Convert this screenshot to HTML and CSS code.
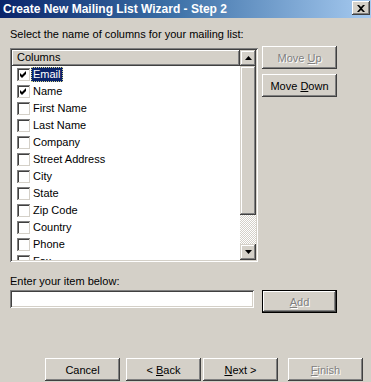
FILE: index.html
```html
<!DOCTYPE html>
<html>
<head>
<meta charset="utf-8">
<link rel="stylesheet" href="styles.css">
</head>
<body>
<div class="window">
  <div class="titlebar">
    <span class="title">Create New Mailing List Wizard - Step 2</span>
    <span class="close"><svg width="8" height="7" viewBox="0 0 8 7"><path d="M0 0h2l2 2 2-2h2L5 3.5 8 7H6L4 5 2 7H0l3-3.5z" fill="#000"/></svg></span>
  </div>
  <div class="content">
    <p class="prompt">Select the name of columns for your mailing list:</p>
    <div class="main">
      <div class="listbox">
        <div class="list-view">
          <div class="header">Columns</div>
          <ul class="rows">
            <li class="row"><span class="check"><svg width="7" height="7" viewBox="0 0 7 7"><path d="M0 2l2 2 4-4v3L2 7 0 5z" fill="#000"/></svg></span><span class="label selected">Email</span></li>
            <li class="row"><span class="check"><svg width="7" height="7" viewBox="0 0 7 7"><path d="M0 2l2 2 4-4v3L2 7 0 5z" fill="#000"/></svg></span><span class="label">Name</span></li>
            <li class="row"><span class="check"></span><span class="label">First Name</span></li>
            <li class="row"><span class="check"></span><span class="label">Last Name</span></li>
            <li class="row"><span class="check"></span><span class="label">Company</span></li>
            <li class="row"><span class="check"></span><span class="label">Street Address</span></li>
            <li class="row"><span class="check"></span><span class="label">City</span></li>
            <li class="row"><span class="check"></span><span class="label">State</span></li>
            <li class="row"><span class="check"></span><span class="label">Zip Code</span></li>
            <li class="row"><span class="check"></span><span class="label">Country</span></li>
            <li class="row"><span class="check"></span><span class="label">Phone</span></li>
            <li class="row"><span class="check"></span><span class="label">Fax</span></li>
          </ul>
        </div>
        <div class="scrollbar">
          <div class="sb-btn"><svg width="7" height="4" viewBox="0 0 7 4"><path d="M3.5 0L7 4H0z" fill="#000"/></svg></div>
          <div class="thumb"></div>
          <div class="track"></div>
          <div class="sb-btn"><svg width="7" height="4" viewBox="0 0 7 4"><path d="M0 0h7L3.5 4z" fill="#000"/></svg></div>
        </div>
      </div>
      <div class="side-buttons">
        <span class="btn disabled">Move <u>U</u>p</span>
        <span class="btn">Move <u>D</u>own</span>
      </div>
    </div>
    <p class="item-label">Enter your item below:</p>
    <div class="item-row">
      <span class="item-input"></span>
      <span class="btn default disabled"><u>A</u>dd</span>
    </div>
    <div class="footer">
      <span class="btn">Cancel</span>
      <span class="btn back">&lt; <u>B</u>ack</span>
      <span class="btn"><u>N</u>ext &gt;</span>
      <span class="btn finish disabled"><u>F</u>inish</span>
    </div>
  </div>
</div>
</body>
</html>
```
FILE: styles.css
```css
* { box-sizing: border-box; }
html, body { margin: 0; padding: 0; }
body {
  background: #d4d0c8;
  font-family: "Liberation Sans", Arial, sans-serif;
  font-size: 11px;
  color: #000;
  width: 371px;
  height: 382px;
  overflow: hidden;
}
.window { width: 371px; height: 382px; }
.titlebar {
  height: 18px;
  display: flex;
  align-items: center;
  background: linear-gradient(to right, #0a246a 0%, #3a6ea5 45%, #a6caf0 100%);
}
.title {
  color: #fff;
  font-weight: bold;
  font-size: 12px;
  padding-left: 3px;
  line-height: 18px;
}
.close {
  margin-left: auto;
  margin-right: 1px;
  margin-top: -2px;
  width: 18px;
  height: 14px;
  display: flex;
  align-items: center;
  justify-content: center;
  background: #d4d0c8;
  box-shadow: inset -1px -1px #404040, inset 1px 1px #fff, inset -2px -2px #808080;
}
.content { padding: 0 8px 0 10px; }
.prompt { margin: 10px 0 0; line-height: 13px; }
.main {
  margin-top: 5px;
  display: grid;
  grid-template-columns: 248px 75px;
  column-gap: 4px;
  align-items: start;
}
.listbox {
  margin-top: 2px;
  height: 214px;
  display: flex;
  padding: 2px;
  background: #fff;
  box-shadow: inset 1px 1px #808080, inset -1px -1px #fff, inset 2px 2px #404040, inset -2px -2px #d4d0c8;
}
.list-view { width: 228px; height: 210px; overflow: hidden; }
.header {
  height: 16px;
  line-height: 15px;
  padding-left: 5px;
  background: #d4d0c8;
  box-shadow: inset -1px -1px #404040, inset 1px 1px #fff, inset -2px -2px #808080;
}
.rows { list-style: none; margin: 0; padding: 0; }
.row { height: 17px; display: flex; align-items: center; padding-left: 5px; }
.check {
  width: 13px;
  height: 13px;
  display: flex;
  align-items: center;
  justify-content: center;
  background: #fff;
  box-shadow: inset 1px 1px #808080, inset -1px -1px #d4d0c8, inset 2px 2px #404040;
  flex: none;
}
.label {
  margin-left: 1px;
  padding: 0 1px;
  line-height: 13px;
  border: 1px solid transparent;
}
.label.selected {
  background: #0a246a;
  color: #fff;
  border: 1px dotted #d8d890;
}
.scrollbar { width: 16px; height: 210px; display: flex; flex-direction: column; }
.sb-btn {
  height: 16px;
  flex: none;
  display: flex;
  align-items: center;
  justify-content: center;
  background: #d4d0c8;
  box-shadow: inset -1px -1px #404040, inset 1px 1px #d4d0c8, inset -2px -2px #808080, inset 2px 2px #fff;
}
.thumb {
  height: 149px;
  flex: none;
  background: #d4d0c8;
  box-shadow: inset -1px -1px #404040, inset 1px 1px #d4d0c8, inset -2px -2px #808080, inset 2px 2px #fff;
}
.track {
  flex: 1;
  background: repeating-conic-gradient(#fff 0 25%, #d4d0c8 0 50%) 0 0 / 2px 2px;
}
.side-buttons { display: flex; flex-direction: column; gap: 5px; }
.btn {
  width: 75px;
  height: 23px;
  display: flex;
  align-items: center;
  justify-content: center;
  white-space: pre;
  background: #d4d0c8;
  box-shadow: inset -1px -1px #404040, inset 1px 1px #fff, inset -2px -2px #808080, inset 2px 2px #d4d0c8;
}
.btn.disabled { color: #808080; text-shadow: 1px 1px #fff; }
.btn.default {
  border: 1px solid #000;
  box-shadow: inset -1px -1px #404040, inset 1px 1px #fff, inset -2px -2px #808080;
}
.item-label { margin: 13px 0 0; line-height: 13px; }
.item-row { display: flex; gap: 8px; align-items: flex-start; margin-top: 2px; }
.item-input {
  width: 244px;
  height: 18px;
  background: #fff;
  box-shadow: inset 1px 1px #808080, inset -1px -1px #fff, inset 2px 2px #404040, inset -2px -2px #d4d0c8;
}
.footer { display: flex; justify-content: flex-end; margin-top: 45px; gap: 2px; }
.btn.back { margin-left: 4px; }
.btn.finish { margin-left: 8px; }
```
